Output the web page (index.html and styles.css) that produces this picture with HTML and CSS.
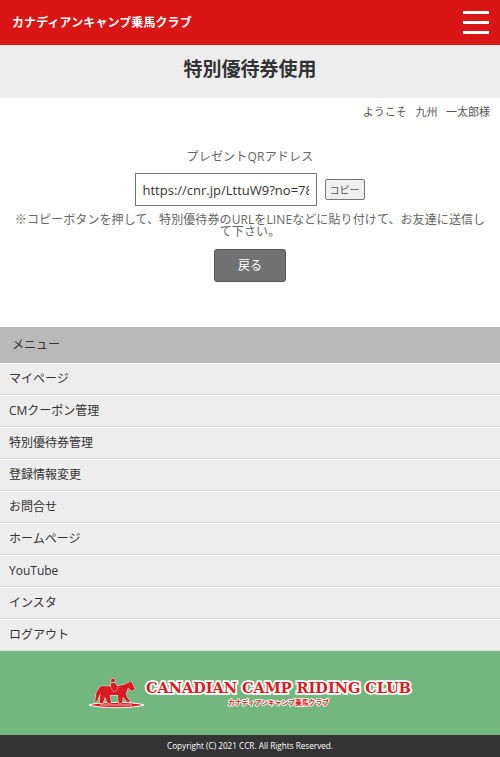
FILE: index.html
```html
<!DOCTYPE html>
<html lang="ja">
<head>
	<meta charset="utf-8">
	<title>特別優待券使用</title>
	<link rel="stylesheet" href="styles.css">
</head>
<body>
	<header class="site-header">
		<span class="site-name">カナディアンキャンプ乗馬クラブ</span>
		<div class="burger"><span></span><span></span><span></span></div>
	</header>
	<h1 class="page-title">特別優待券使用</h1>
	<p class="welcome">ようこそ&nbsp;&nbsp;&nbsp;九州&nbsp;&nbsp;&nbsp;一太郎様</p>
	<main class="content">
		<p class="qr-label">プレゼントQRアドレス</p>
		<div class="qr-row">
			<input class="qr-input" type="text" value="https://cnr.jp/LttuW9?no=78">
			<button class="copy-btn" type="button">コピー</button>
		</div>
		<p class="note">※コピーボタンを押して、特別優待券のURLをLINEなどに貼り付けて、お友達に送信して下さい。</p>
		<a class="back-btn" href="#">戻る</a>
	</main>
	<nav class="menu">
		<div class="menu-head">メニュー</div>
		<ul class="menu-list">
			<li>マイページ</li>
			<li>CMクーポン管理</li>
			<li>特別優待券管理</li>
			<li>登録情報変更</li>
			<li>お問合せ</li>
			<li>ホームページ</li>
			<li>YouTube</li>
			<li>インスタ</li>
			<li>ログアウト</li>
		</ul>
	</nav>
	<div class="logo-band">
		<svg class="logo" width="330" height="34" viewBox="0 0 330 34">
			<path class="logo-base" d="M4 28 C14 24.500 49 24.500 59 28 C49 31.500 14 31.500 4 28 Z"/>
			<path class="logo-horse" d="M15 10 L17 9 L28 9.500 L38 8 L44 5.500 L46 4 L47 6 L50 12 L47 14 L43 11 L41 16 L42 20 L45 24 L43 25.500 L38 20 L37 26 L33.500 26 L33 18 L25 18 L26 26 L22.500 26 L20 20 L18 26 L14.500 26 L15.500 16 L12 24 L10 25 L11.500 15 Z"/>
			<circle class="logo-horse" cx="28" cy="3.500" r="2"/>
			<path class="logo-horse" d="M26 6 L30 6 L33 10 L31 14 L28 14 L26 10 Z"/>
			<rect class="logo-strip" x="15" y="27.500" width="32" height="1"/>
			<text class="logo-main" x="61" y="15.500" textLength="265" lengthAdjust="spacingAndGlyphs">CANADIAN CAMP RIDING CLUB</text>
			<text class="logo-sub" x="143" y="28" textLength="101" lengthAdjust="spacingAndGlyphs">カナディアンキャンプ乗馬クラブ</text>
		</svg>
	</div>
	<footer class="copyright">Copyright (C) 2021 CCR. All Rights Reserved.</footer>
</body>
</html>
```

FILE: styles.css
```css
*{
	margin: 0;
	padding: 0;
	box-sizing: border-box;
}
body{
	font-family: "Open Sans", "Noto Sans CJK JP", sans-serif;
	font-size: 12px;
	color: #333;
	background: #fff;
}
.site-header{
	height: 45px;
	background: #d91615;
	display: flex;
	align-items: center;
	justify-content: space-between;
	padding: 0 11px 1px 12px;
}
.site-name{
	color: #fff;
	font-size: 12px;
	font-weight: bold;
	letter-spacing: .1px;
}
.burger{
	width: 26px;
	height: 23px;
	display: flex;
	flex-direction: column;
	justify-content: space-between;
}
.burger span{
	display: block;
	height: 3px;
	background: #fff;
}
.page-title{
	height: 53px;
	background: #ededed;
	font-size: 19px;
	line-height: 48px;
	font-weight: bold;
	text-align: center;
	color: #333;
}
.welcome{
	font-size: 11px;
	line-height: 16px;
	padding: 6px 10px 0 0;
	text-align: right;
	color: #555;
}
.content{
	height: 207px;
	padding-top: 27px;
	text-align: center;
	color: #666;
}
.qr-label{
	font-size: 12px;
	line-height: 20px;
	letter-spacing: .2px;
}
.qr-row{
	display: flex;
	justify-content: center;
	align-items: center;
	gap: 8px;
	margin-top: 6px;
	padding-right: 1px;
}
.qr-input{
	width: 182px;
	height: 33px;
	padding: 0 7px;
	border: 1px solid #767676;
	font-family: inherit;
	font-size: 13px;
	color: #333;
	background: #fff;
}
.copy-btn{
	width: 40px;
	height: 21px;
	border: 1px solid #767676;
	border-radius: 2px;
	background: #efefef;
	font-family: inherit;
	font-size: 10px;
	color: #555;
}
.note{
	font-size: 12px;
	line-height: 12px;
	letter-spacing: .1px;
	margin-top: 8px;
	padding: 0 13px;
}
.back-btn{
	display: block;
	width: 72px;
	height: 33px;
	margin: 11px auto 0;
	background: #727272;
	border: 1px solid #555;
	border-radius: 3px;
	color: #fff;
	font-size: 12px;
	line-height: 31px;
	text-decoration: none;
}
.menu-head{
	height: 36px;
	background: #b9b9b9;
	padding-left: 12px;
	font-size: 12px;
	line-height: 35px;
	color: #333;
}
.menu-list{
	list-style: none;
}
.menu-list li{
	height: 32px;
	background: #ededed;
	border-top: 1px solid #fff;
	border-bottom: 1px solid #ddd;
	padding-left: 9px;
	font-size: 12px;
	line-height: 29px;
	color: #333;
}
.logo-band{
	height: 84px;
	background: #73b77f;
	display: flex;
	justify-content: center;
	padding-top: 26px;
}
.logo-base{
	fill: #dc1a22;
	stroke: #fff;
	stroke-width: 1;
}
.logo-horse{
	fill: #dc1a22;
	stroke: #fff;
	stroke-width: .8;
	paint-order: stroke;
}
.logo-strip{
	fill: #f5b5b5;
}
.logo-main{
	font-family: "DejaVu Serif", serif;
	font-size: 14px;
	font-weight: bold;
	fill: #dc1a22;
	stroke: #fff;
	stroke-width: 3.500;
	paint-order: stroke;
}
.logo-sub{
	font-family: "Noto Sans CJK JP", sans-serif;
	font-size: 6.500px;
	font-weight: bold;
	fill: #dc1a22;
	stroke: #fff;
	stroke-width: 1.500;
	paint-order: stroke;
}
.copyright{
	height: 22px;
	background: #333;
	color: #fff;
	font-size: 8.200px;
	line-height: 21px;
	text-align: center;
}
```
